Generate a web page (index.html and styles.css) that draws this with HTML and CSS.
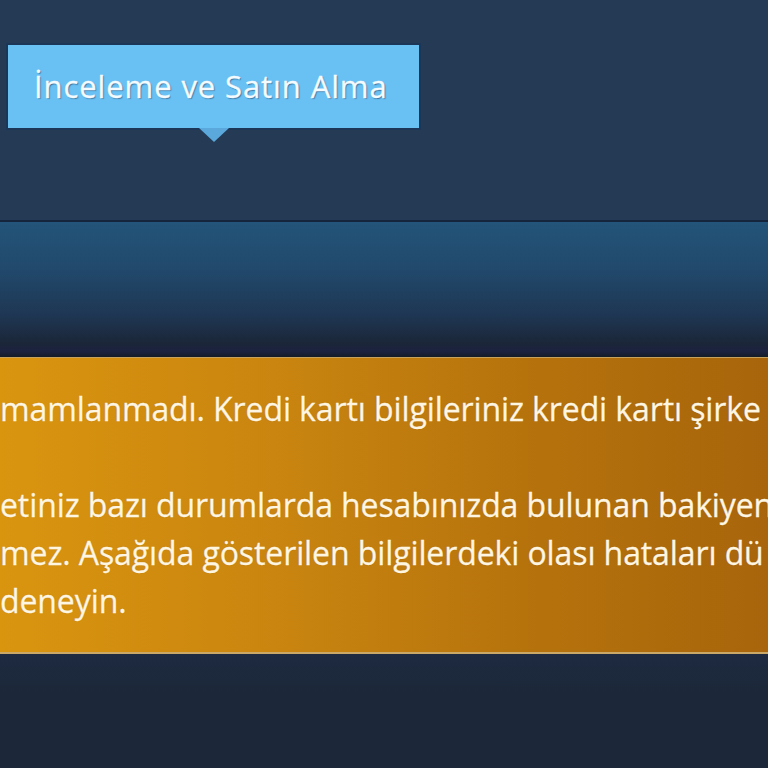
FILE: index.html
```html
<!DOCTYPE html>
<html lang="tr">
<head>
  <meta charset="UTF-8" />
  <meta name="viewport" content="width=device-width, initial-scale=1.0"/>
  <title>İnceleme ve Satın Alma</title>
  <link rel="stylesheet" href="styles.css">
</head>
<body>
  <!-- Checkout steps -->
  <div class="steps">
    <div class="step active">İnceleme ve Satın Alma</div>
  </div>

  <!-- Page header band -->
  <div class="band"></div>

  <!-- Payment error notice -->
  <div class="notice">
    <p class="line">mamlanmadı. Kredi kartı bilgileriniz kredi kartı şirke</p>
    <p class="line">&nbsp;</p>
    <p class="line">etiniz bazı durumlarda hesabınızda bulunan bakiyen</p>
    <p class="line">mez. Aşağıda gösterilen bilgilerdeki olası hataları dü</p>
    <p class="line">deneyin.</p>
  </div>

  <div class="rest"></div>
</body>
</html>
```

FILE: styles.css
```css
body {
  margin: 0;
  height: 100vh;
  overflow: hidden;
  background: #1c2839;
  font-family: "Open Sans", "Noto Sans", sans-serif;
  color: #fff;
}

.steps {
  height: 222px;
  padding: 45px 0 0 8px;
  box-sizing: border-box;
  background: #243a55;
  border-bottom: 2px solid #15263c;
}

.step {
  position: relative;
  display: inline-block;
  width: 411px;
  height: 83px;
  box-sizing: border-box;
  padding: 0 0 0 26px;
  line-height: 82px;
  font-size: 31px;
  letter-spacing: 0.9px;
  background: #68c0f3;
  color: #f4fbff;
  -webkit-text-stroke: 0.3px #f4fbff;
  text-shadow: 1px 1px 1px rgba(30, 70, 110, 0.6);
  box-shadow: 0 0 0 2px #1b3656;
}

/* little pointer under the active step */
.step.active::after {
  content: "";
  position: absolute;
  left: 191px;
  top: 83px;
  border-left: 15px solid transparent;
  border-right: 15px solid transparent;
  border-top: 14px solid #5aa8dc;
}

.band {
  height: 135px;
  background: linear-gradient(to bottom, #235479 0%, #21496c 35%, #1e3652 70%, #1b2638 90%, #1b2240 96%, #141c26 100%);
}

.notice {
  height: 297px;
  box-sizing: border-box;
  padding: 27px 0 0 0;
  overflow: hidden;
  background: linear-gradient(to right, #da950f 0%, #c7830f 40%, #b5720c 70%, #a8650b 100%);
  border-top: 1px solid #c6a25e;
  border-bottom: 2px solid #c9a868;
  box-shadow: 0 2px 0 #1a1a1a;
}

.line {
  margin: 0;
  white-space: nowrap;
  font-size: 32px;
  line-height: 48px;
  letter-spacing: -0.1px;
  color: #fff6e2;
  -webkit-text-stroke: 0.3px #fff6e2;
  text-shadow: 0 0 1px rgba(90, 50, 0, 0.4);
}

.rest {
  height: 100px;
  background: linear-gradient(to bottom, #1d2a40, #1c2839 40%);
}
```
